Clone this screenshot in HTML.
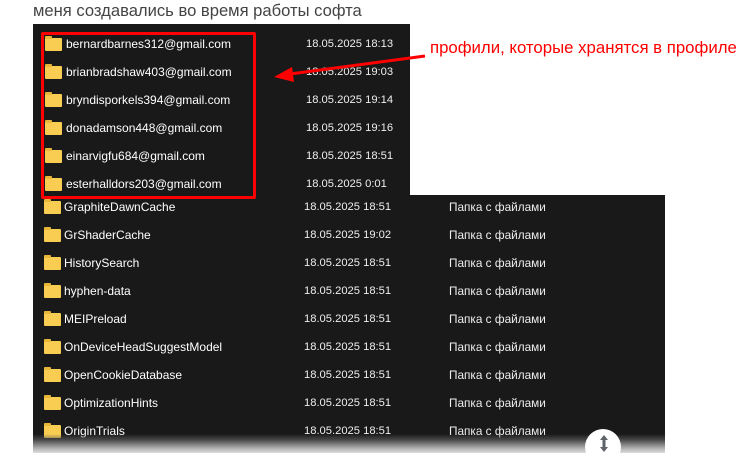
<!DOCTYPE html>
<html><head><meta charset="utf-8"><style>
body{margin:0;width:751px;height:453px;background:#fff;position:relative;overflow:hidden;font-family:"Liberation Sans","DejaVu Sans",sans-serif}
.h{position:absolute;left:33px;top:1px;font-size:16.6px;color:#444}
.p{position:absolute;background:#191919}
.r{position:absolute;height:28px;line-height:28px;color:#fff;font-size:12px;white-space:nowrap}
.f{position:absolute;width:17px;height:13px;background:#f8cd52;border-radius:1px}
.f:before{content:"";position:absolute;left:0;top:-2px;width:7px;height:3px;background:#e8b63a;border-radius:1px 1px 0 0}
.d{position:absolute;color:#eee;font-size:11.2px}
.t{position:absolute;color:#eee;font-size:11.8px}
</style></head><body>
<div class="h">меня создавались во время работы софта</div>
<div class="p" style="left:33px;top:24px;width:377px;height:172px"></div>
<div class="p" style="left:33px;top:195px;width:632px;height:258px"></div>
<div id="rows"></div>
<div style="position:absolute;left:33px;top:434px;width:632px;height:19px;background:linear-gradient(rgba(25,25,25,0),rgba(90,90,90,.7) 30%,#b0b0b0 75%,#dcdcdc)"></div>
<div style="position:absolute;left:585px;top:429px;width:36px;height:36px;border-radius:50%;background:#fff"></div>
<svg style="position:absolute;left:597px;top:434px" width="14" height="19"><path d="M7 1 L11 6 H3 Z M7 18 L11 13 H3 Z" fill="#5f6368"/><rect x="5.5" y="5" width="3" height="9" fill="#5f6368"/></svg>
<div style="position:absolute;left:41px;top:32px;width:209px;height:161px;border:3px solid #f00;border-radius:2px"></div>
<svg style="position:absolute;left:0;top:0" width="751" height="453"><line x1="425" y1="56" x2="290" y2="74" stroke="#f00" stroke-width="3"/><polygon points="274,77 292,67 294,82" fill="#f00"/></svg>
<div style="position:absolute;left:430px;top:38px;font-size:16.8px;color:#f00">профили, которые хранятся в профиле</div>
<script>
var up=[["bernardbarnes312@gmail.com","18.05.2025 18:13"],["brianbradshaw403@gmail.com","18.05.2025 19:03"],["bryndisporkels394@gmail.com","18.05.2025 19:14"],["donadamson448@gmail.com","18.05.2025 19:16"],["einarvigfu684@gmail.com","18.05.2025 18:51"],["esterhalldors203@gmail.com","18.05.2025 0:01"]];
var lo=[["GraphiteDawnCache","18.05.2025 18:51"],["GrShaderCache","18.05.2025 19:02"],["HistorySearch","18.05.2025 18:51"],["hyphen-data","18.05.2025 18:51"],["MEIPreload","18.05.2025 18:51"],["OnDeviceHeadSuggestModel","18.05.2025 18:51"],["OpenCookieDatabase","18.05.2025 18:51"],["OptimizationHints","18.05.2025 18:51"],["OriginTrials","18.05.2025 18:51"]];
var h="";
up.forEach(function(r,i){var y=30+i*28;h+='<div class="f" style="left:45px;top:'+(y+8)+'px"></div><div class="r" style="left:66px;top:'+y+'px">'+r[0]+'<span class="d" style="left:240px">'+r[1]+'</span></div>';});
lo.forEach(function(r,i){var y=193+i*28;h+='<div class="f" style="left:44px;top:'+(y+8)+'px"></div><div class="r" style="left:64px;top:'+y+'px">'+r[0]+'<span class="d" style="left:240px">'+r[1]+'</span><span class="t" style="left:385px">Папка с файлами</span></div>';});
document.getElementById("rows").innerHTML=h;
</script>
</body></html>
